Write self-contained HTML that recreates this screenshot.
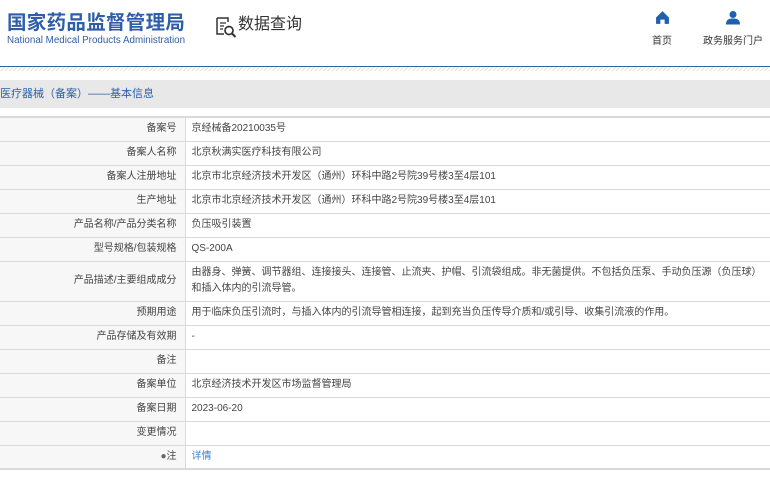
<!DOCTYPE html>
<html><head><meta charset="utf-8"><style>
*{margin:0;padding:0;box-sizing:border-box}
body{width:770px;height:482px;overflow:hidden;background:#fff;font-family:"Liberation Sans","Noto Sans CJK SC",sans-serif;color:#444}
.logo1{position:absolute;left:7px;top:9px;font-size:19.5px;font-weight:bold;color:#2f5ea8;letter-spacing:0.3px;font-family:"Noto Sans CJK SC",sans-serif;line-height:24px}
.logo2{position:absolute;left:7px;top:35px;font-size:9.8px;color:#2f5ea8;white-space:nowrap}
.sq{position:absolute;left:216px;top:15px;font-size:16px;color:#333;line-height:20px}
.nav{position:absolute;top:10px;font-size:10px;color:#333;text-align:center}
.hline{position:absolute;left:0;top:66px;width:770px;height:1px;background:#2d6aa8}
.hatch{position:absolute;left:0;top:67px;width:770px;height:4px;background:repeating-linear-gradient(135deg,#e3e3e3 0 1px,#fff 1px 3px)}
.bar{position:absolute;left:0;top:80px;width:770px;height:28px;background:#e8e8e8;font-size:11px;color:#2f5ea8;line-height:28px;padding-left:0}
table{position:absolute;left:-1px;top:116px;width:772px;border-collapse:collapse;font-size:10px}
td{border-top:1px solid #d9d9d9;height:24px;padding:0 6px;line-height:16px;font-weight:normal}
td.l{width:186px;text-align:right;background:#f7f7f7;border-right:1px solid #d9d9d9;padding-right:8px}
tr.tall td{height:40px}
tr:first-child td{border-top:2px solid #d9d9d9}
tr:last-child td{border-bottom:2px solid #d9d9d9}
a{color:#3d7fd0;text-decoration:none}
</style></head><body>
<div class="logo1">国家药品监督管理局</div>
<div class="logo2">National Medical Products Administration</div>
<svg style="position:absolute;left:216px;top:17px" width="22" height="22" viewBox="0 0 22 22"><path d="M1 1h11v4M1 1v16h7" fill="none" stroke="#333" stroke-width="1.5"/><path d="M4 6h6M4 9h4M4 12h3" stroke="#333" stroke-width="1.3"/><circle cx="13" cy="13.5" r="4" fill="none" stroke="#333" stroke-width="1.7"/><path d="M16 16.5l3.5 3.5" stroke="#333" stroke-width="2"/></svg>
<div class="sq" style="left:238px">数据查询</div>
<div class="nav" style="left:649px;width:26px"><svg width="15" height="15" viewBox="0 0 14 14"><path d="M7 1L1 7v6h4V9h4v4h4V7z" fill="#1f5fae"/></svg><div style="margin-top:4px">首页</div></div>
<div class="nav" style="left:702px;width:62px"><svg width="16" height="15" viewBox="0 0 16 14"><circle cx="8" cy="4" r="3.5" fill="#1f5fae"/><path d="M1 14c0-5 3-6 7-6s7 1 7 6z" fill="#1f5fae"/></svg><div style="margin-top:4px">政务服务门户</div></div>
<div class="hline"></div><div class="hatch"></div>
<div class="bar">医疗器械（备案）——基本信息</div>
<table>
<tr><td class="l">备案号</td><td>京经械备20210035号</td></tr>
<tr><td class="l">备案人名称</td><td>北京秋满实医疗科技有限公司</td></tr>
<tr><td class="l">备案人注册地址</td><td>北京市北京经济技术开发区（通州）环科中路2号院39号楼3至4层101</td></tr>
<tr><td class="l">生产地址</td><td>北京市北京经济技术开发区（通州）环科中路2号院39号楼3至4层101</td></tr>
<tr><td class="l">产品名称/产品分类名称</td><td>负压吸引装置</td></tr>
<tr><td class="l">型号规格/包装规格</td><td>QS-200A</td></tr>
<tr class="tall"><td class="l">产品描述/主要组成成分</td><td>由器身、弹簧、调节器组、连接接头、连接管、止流夹、护帽、引流袋组成。非无菌提供。不包括负压泵、手动负压源（负压球）和插入体内的引流导管。</td></tr>
<tr><td class="l">预期用途</td><td>用于临床负压引流时，与插入体内的引流导管相连接，起到充当负压传导介质和/或引导、收集引流液的作用。</td></tr>
<tr><td class="l">产品存储及有效期</td><td>-</td></tr>
<tr><td class="l">备注</td><td></td></tr>
<tr><td class="l">备案单位</td><td>北京经济技术开发区市场监督管理局</td></tr>
<tr><td class="l">备案日期</td><td>2023-06-20</td></tr>
<tr><td class="l">变更情况</td><td></td></tr>
<tr><td class="l"><span style="color:#666">●</span>注</td><td><a>详情</a></td></tr>
</table>
</body></html>
